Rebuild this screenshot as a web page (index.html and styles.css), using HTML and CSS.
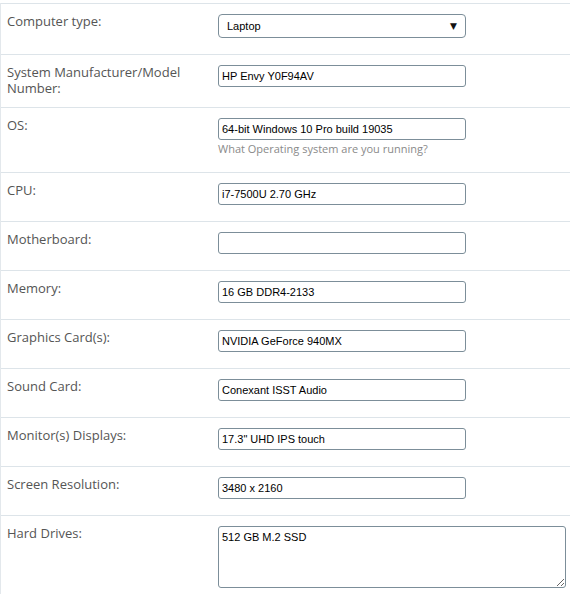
FILE: index.html
```html
<!DOCTYPE html>
<html>
<head>
<meta charset="utf-8">
<link rel="stylesheet" href="styles.css">
</head>
<body>
<div class="form">
  <div class="row">
    <label class="label">Computer type:</label>
    <div class="field">
      <div class="select-wrap">
        <select class="select"><option>Laptop</option></select>
      </div>
    </div>
  </div>
  <div class="row">
    <label class="label">System Manufacturer/Model Number:</label>
    <div class="field"><input class="input" type="text" value="HP Envy Y0F94AV"></div>
  </div>
  <div class="row">
    <label class="label">OS:</label>
    <div class="field">
      <input class="input" type="text" value="64-bit Windows 10 Pro build 19035">
      <div class="hint">What Operating system are you running?</div>
    </div>
  </div>
  <div class="row">
    <label class="label">CPU:</label>
    <div class="field"><input class="input" type="text" value="i7-7500U 2.70 GHz"></div>
  </div>
  <div class="row">
    <label class="label">Motherboard:</label>
    <div class="field"><input class="input" type="text" value=""></div>
  </div>
  <div class="row">
    <label class="label">Memory:</label>
    <div class="field"><input class="input" type="text" value="16 GB DDR4-2133"></div>
  </div>
  <div class="row">
    <label class="label">Graphics Card(s):</label>
    <div class="field"><input class="input" type="text" value="NVIDIA GeForce 940MX"></div>
  </div>
  <div class="row">
    <label class="label">Sound Card:</label>
    <div class="field"><input class="input" type="text" value="Conexant ISST Audio"></div>
  </div>
  <div class="row">
    <label class="label">Monitor(s) Displays:</label>
    <div class="field"><input class="input" type="text" value="17.3&quot; UHD IPS touch"></div>
  </div>
  <div class="row">
    <label class="label">Screen Resolution:</label>
    <div class="field"><input class="input" type="text" value="3480 x 2160"></div>
  </div>
  <div class="row last">
    <label class="label">Hard Drives:</label>
    <div class="field"><textarea class="textarea">512 GB M.2 SSD</textarea></div>
  </div>
</div>
</body>
</html>
```

FILE: styles.css
```css
html, body {
  margin: 0;
  padding: 0;
  background: #fff;
}

.form {
  width: 569px;
  margin-top: 3px;
  border-left: 1px solid #e3e8ec;
  font-family: "Open Sans", sans-serif;
}

.row {
  display: grid;
  grid-template-columns: 201px 1fr;
  column-gap: 10px;
  padding: 10px 0 10px 6px;
  border-top: 1px solid #dde4e9;
}

.label {
  margin: -1px 0 1px 0;
  font-size: 13px;
  line-height: 16px;
  color: #555;
}

.field {
  display: flex;
  flex-direction: column;
  align-items: flex-start;
}

.input {
  box-sizing: border-box;
  width: 248px;
  height: 22px;
  margin: 0 0 6px 0;
  padding: 0 3px;
  border: 1px solid #7c8e99;
  border-radius: 3px;
  font-family: "Liberation Sans", Arial, sans-serif;
  font-size: 11px;
  color: #000;
  background: #fff;
  outline: none;
}

.hint {
  margin: -6px 0 5px 0;
  font-size: 11px;
  line-height: 17px;
  color: #8a8a8a;
}

.select-wrap {
  position: relative;
  width: 248px;
  margin-bottom: 6px;
}

.select-wrap::after {
  content: "▼";
  position: absolute;
  right: 9px;
  top: 7px;
  font-size: 9px;
  line-height: 10px;
  color: #111;
  pointer-events: none;
  font-family: "DejaVu Sans", sans-serif;
}

.select {
  -webkit-appearance: none;
  appearance: none;
  box-sizing: border-box;
  display: block;
  width: 248px;
  height: 24px;
  margin: 0;
  padding: 0 8px;
  border: 1px solid #7c8e99;
  border-radius: 4px;
  background: #fff;
  font-family: "Liberation Sans", Arial, sans-serif;
  font-size: 11px;
  color: #000;
  outline: none;
}

.textarea {
  box-sizing: border-box;
  display: block;
  width: 348px;
  height: 62px;
  margin: 0;
  padding: 4px 3px;
  border: 1px solid #7c8e99;
  border-radius: 3px;
  font-family: "Liberation Sans", Arial, sans-serif;
  font-size: 11px;
  color: #000;
  resize: both;
  outline: none;
}
```
